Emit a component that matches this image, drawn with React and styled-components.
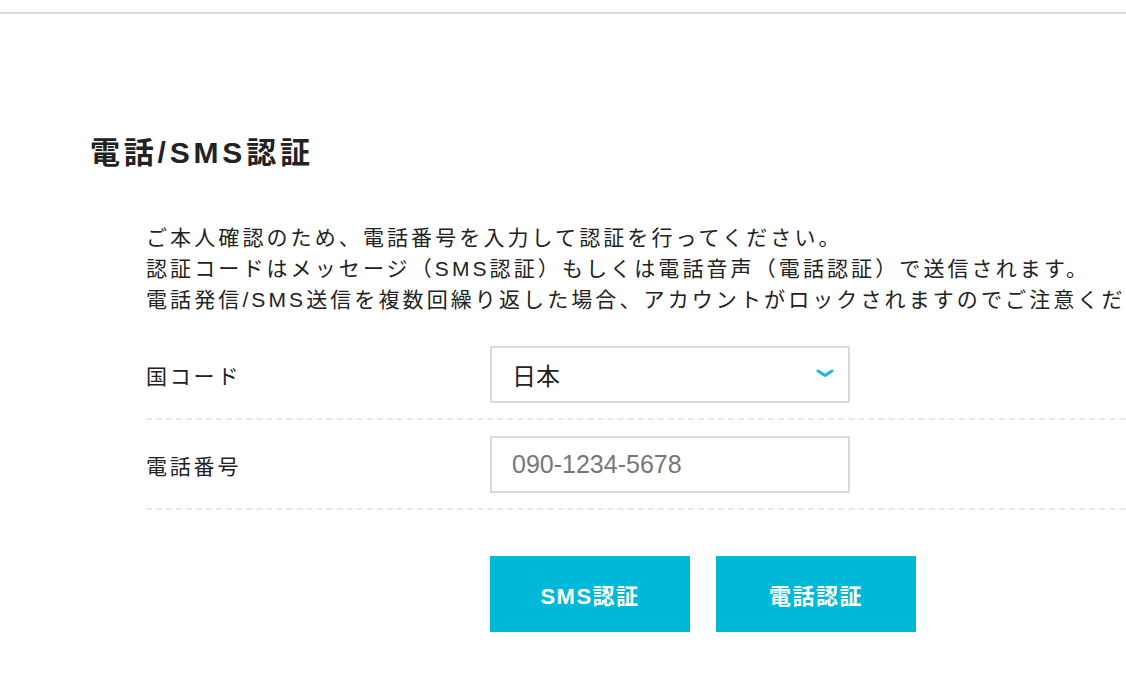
import React from "react";
import styled, { createGlobalStyle } from "styled-components";

const Global = createGlobalStyle`
  html, body { margin: 0; padding: 0; background: #fff; overflow: hidden; }
  body { font-family: "Liberation Sans", "Noto Sans CJK JP", sans-serif; color: #222; }
`;

const TopBar = styled.div`
  height: 12px;
  border-bottom: 2px solid #d8d8d8;
`;

const Page = styled.main`
  padding: 119px 0 0 90px;
`;

const Title = styled.h1`
  margin: 0;
  font-size: 30px;
  line-height: 40px;
  font-weight: 700;
  letter-spacing: 3.8px;
  color: #222;
`;

const Body = styled.div`
  padding: 49px 0 0 56px;
  width: 1200px;
`;

const Lead = styled.p`
  margin: 0 0 15px;
  font-size: 21px;
  line-height: 31px;
  letter-spacing: 3.1px;
  white-space: nowrap;
  color: #222;
`;

const Row = styled.div`
  display: flex;
  align-items: center;
  padding: 16px 0 15px;
  border-bottom: 2px dashed #e8e8e8;
`;

const Label = styled.div`
  width: 344px;
  flex: none;
  font-size: 21px;
  letter-spacing: 2.8px;
  color: #222;
`;

const Field = styled.div`
  position: relative;
  width: 360px;
  height: 57px;
  box-sizing: border-box;
  border: 2px solid #dadada;
  display: flex;
  align-items: center;
  padding: 0 20px;
  font-size: ${(p) => (p.$placeholder ? "25px" : "24px")};
  color: ${(p) => (p.$placeholder ? "#777" : "#222")};
`;

const Chevron = styled.svg`
  position: absolute;
  right: 14px;
  top: 21px;
`;

const Buttons = styled.div`
  display: flex;
  gap: 26px;
  margin: 46px 0 0 344px;
`;

const Button = styled.button`
  width: 200px;
  height: 76px;
  border: none;
  background: #00b9d9;
  color: #fff;
  font-family: "Liberation Sans", "Noto Sans CJK JP", sans-serif;
  font-size: 22px;
  font-weight: 700;
  letter-spacing: 1.5px;
  cursor: pointer;
`;

export default function App() {
  return (
    <>
      <Global />
      <TopBar />
      <Page>
        <Title>電話/SMS認証</Title>
        <Body>
          <Lead>
            ご本人確認のため、電話番号を入力して認証を行ってください。
            <br />
            認証コードはメッセージ（SMS認証）もしくは電話音声（電話認証）で送信されます。
            <br />
            電話発信/SMS送信を複数回繰り返した場合、アカウントがロックされますのでご注意ください。
          </Lead>
          <Row>
            <Label>国コード</Label>
            <Field>
              日本
              <Chevron width="18" height="10" viewBox="0 0 18 10">
                <path d="M2 2 L9 6.5 L16 2" fill="none" stroke="#1ab8d8" strokeWidth="3" strokeLinecap="round" strokeLinejoin="round" />
              </Chevron>
            </Field>
          </Row>
          <Row>
            <Label>電話番号</Label>
            <Field $placeholder>090-1234-5678</Field>
          </Row>
          <Buttons>
            <Button>SMS認証</Button>
            <Button>電話認証</Button>
          </Buttons>
        </Body>
      </Page>
    </>
  );
}
